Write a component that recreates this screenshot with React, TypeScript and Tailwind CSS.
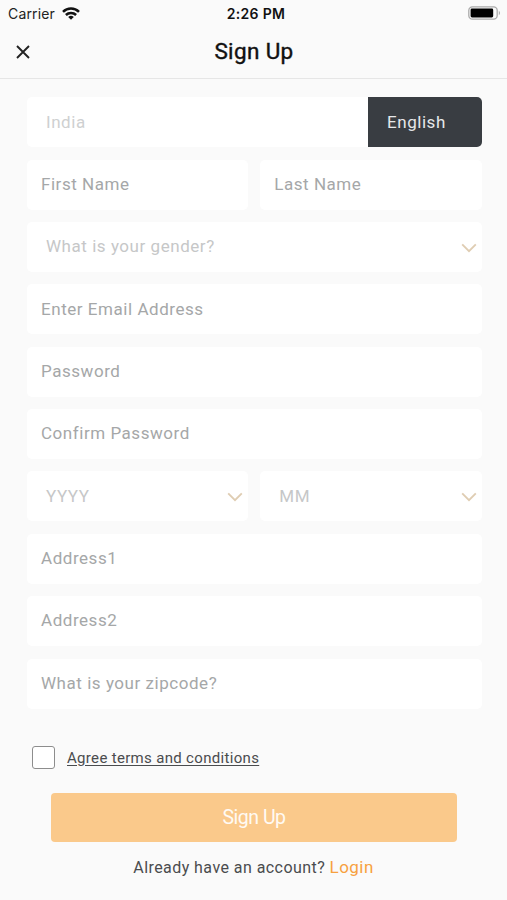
import React from 'react';

interface FieldProps {
  label: string;
  select?: boolean;
}

const Field: React.FC<FieldProps> = ({ label, select }) => {
  if (select) {
    return (
      <div className="flex h-[50px] flex-1 items-center justify-between rounded-[5px] bg-white pl-[19px] pr-[5px] text-[#c6c7c8]">
        <span>{label}</span>
        <svg className="mt-[2px]" width="16" height="10" viewBox="0 0 16 10" fill="none">
          <path d="M1.2 1.4 8 8.1l6.8-6.7" stroke="#dfcdb3" strokeWidth="1.9" />
        </svg>
      </div>
    );
  }

  return (
    <div className="flex h-[50px] flex-1 items-center rounded-[5px] bg-white pl-[14px] text-[#a5a7a8]">
      <span>{label}</span>
    </div>
  );
};

const StatusBar: React.FC = () => (
  <div className="grid h-[27px] grid-cols-3 items-center pl-[8px] pr-[6px] font-['Inter',sans-serif] text-[14px] text-[#222]">
    <div className="flex items-center gap-[7px]">
      <span className="tracking-[0.15px]">Carrier</span>
      <svg className="-mt-px" width="18" height="13" viewBox="0 0 18 13" fill="none" stroke="#111" strokeWidth="2.5">
        <path d="M1 4.8a11.3 11.3 0 0 1 16 0" />
        <path d="M3.9 8a7.2 7.2 0 0 1 10.2 0" />
        <path d="M9 12.8 6.2 10a4 4 0 0 1 5.6 0z" fill="#111" stroke="none" />
      </svg>
    </div>
    <span className="pl-[3px] text-center text-[14px] font-semibold tracking-[0.3px] text-[#111]">2:26 PM</span>
    <svg className="-mt-px justify-self-end" width="33" height="14" viewBox="0 0 33 14" fill="none">
      <rect x="0.8" y="0.8" width="28.4" height="12.4" rx="3.6" stroke="#aaa" strokeWidth="1.3" />
      <rect x="2.6" y="2.6" width="22.6" height="8.8" rx="1.4" fill="#000" />
      <path d="M30.8 4.8c1.6.7 1.6 3.7 0 4.4z" fill="#aaa" />
    </svg>
  </div>
);

const Header: React.FC = () => (
  <header className="grid h-[52px] grid-cols-3 items-center border-b border-[#e6e6e6] px-[16px] pb-px">
    <button type="button" aria-label="Close" className="w-fit">
      <svg width="14" height="14" viewBox="0 0 14 14" fill="none">
        <path d="m1 1 12 12M13 1 1 13" stroke="#222" strokeWidth="1.9" />
      </svg>
    </button>
    <h1 className="whitespace-nowrap pl-px text-center text-[22.5px] font-normal tracking-[0.35px] text-[#111] [-webkit-text-stroke:0.4px_#111]">
      Sign Up
    </h1>
  </header>
);

const App: React.FC = () => {
  return (
    <div className="h-[900px] w-[507px] overflow-hidden bg-[#fafafa] font-['Roboto',sans-serif]">
      <StatusBar />
      <Header />

      <div className="ml-[27px] mr-[25.5px] mt-[18.3px] flex flex-col gap-[12.37px] text-[17px] tracking-[0.54px]">
        <div className="flex h-[50px] overflow-hidden rounded-[5px] bg-white">
          <div className="flex flex-1 items-center pl-[19px] pt-px text-[#ced0d1]">
            <span>India</span>
          </div>
          <div className="flex w-[114px] items-center bg-[#393d42] pl-[19.5px] pt-px text-[#e6e8ea]">
            <span>English</span>
          </div>
        </div>
        <div className="flex gap-[12px]">
          <Field label="First Name" />
          <Field label="Last Name" />
        </div>
        <div className="flex">
          <Field label="What is your gender?" select />
        </div>
        <div className="flex">
          <Field label="Enter Email Address" />
        </div>
        <div className="flex">
          <Field label="Password" />
        </div>
        <div className="flex">
          <Field label="Confirm Password" />
        </div>
        <div className="flex gap-[12px]">
          <Field label="YYYY" select />
          <Field label="MM" select />
        </div>
        <div className="flex">
          <Field label="Address1" />
        </div>
        <div className="flex">
          <Field label="Address2" />
        </div>
        <div className="flex">
          <Field label="What is your zipcode?" />
        </div>
      </div>

      <div className="ml-[32px] mt-[37.4px] flex h-[23px] items-center gap-[12px]">
        <div className="size-[23px] rounded-[3px] border-[1.5px] border-[#8d8d8d] bg-white" />
        <a className="pt-px text-[15px] tracking-[0.32px] text-[#4a4c4e] underline underline-offset-2">Agree terms and conditions</a>
      </div>

      <button
        type="button"
        className="ml-[51px] mt-[24px] flex h-[49px] w-[406px] items-center justify-center rounded-[4px] bg-[#fac98b] text-[19.5px] tracking-[-0.5px] text-[#fffaf3]"
      >
        Sign Up
      </button>

      <p className="mt-[13px] text-center text-[16px] tracking-[0.44px] text-[#4a4c4e]">
        Already have an account? <a className="text-[17px] text-[#f7a13f]">Login</a>
      </p>
    </div>
  );
};

export default App;
